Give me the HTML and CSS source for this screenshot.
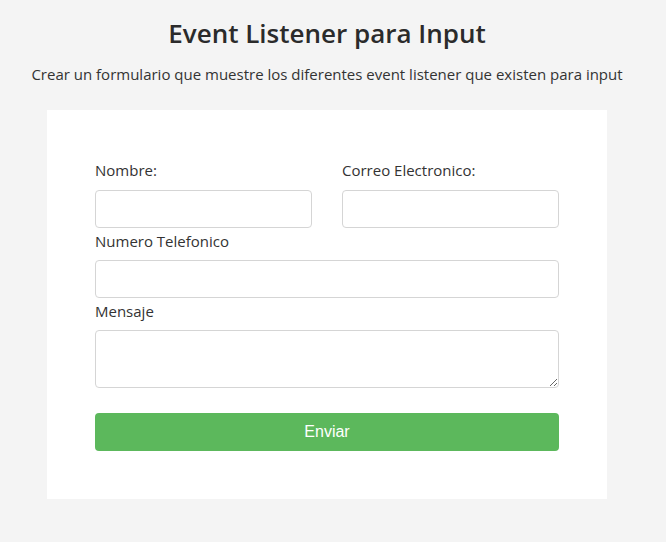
FILE: index.html
```html
<!DOCTYPE html>
<html lang="es">
<head>
<meta charset="utf-8">
<title>Event Listener para Input</title>
<link rel="stylesheet" href="styles.css">
</head>
<body>
<div class="page">
  <header class="header">
    <h1 class="title">Event Listener para Input</h1>
    <p class="subtitle">Crear un formulario que muestre los diferentes event listener que existen para input</p>
  </header>
  <main class="card">
    <form class="form">
      <div class="row">
        <div class="field">
          <label class="label" for="nombre">Nombre:</label>
          <input class="input" id="nombre" type="text">
        </div>
        <div class="field">
          <label class="label" for="correo">Correo Electronico:</label>
          <input class="input" id="correo" type="email">
        </div>
      </div>
      <div class="field">
        <label class="label" for="tel">Numero Telefonico</label>
        <input class="input" id="tel" type="tel">
      </div>
      <div class="field">
        <label class="label" for="msg">Mensaje</label>
        <textarea class="input textarea" id="msg"></textarea>
      </div>
      <button class="button" type="button">Enviar</button>
    </form>
  </main>
</div>
</body>
</html>
```
FILE: styles.css
```css
* { box-sizing: border-box; }
html, body { margin: 0; padding: 0; }
body {
  background: #f4f4f4;
  font-family: "Open Sans", "Noto Sans", sans-serif;
  color: #333;
  font-size: 15px;
}
.page {
  width: 654px;
}
.header {
  text-align: center;
  padding-top: 14px;
}
.title {
  margin: 0;
  font-size: 26px;
  font-weight: 600;
  line-height: 38px;
  color: #2b2b2b;
}
.subtitle {
  margin: 12px 0 0;
  font-size: 15px;
  line-height: 20px;
}
.card {
  width: 560px;
  margin: 26px auto 0;
  background: #fff;
  padding: 48px;
}
.form {
  display: flex;
  flex-direction: column;
}
.row {
  display: flex;
  gap: 30px;
}
.row .field { flex: 1 1 0; min-width: 0; }
.field {
  display: flex;
  flex-direction: column;
}
.label {
  line-height: 24px;
  margin-bottom: 7px;
}
.row .label { margin-bottom: 8px; }
.input {
  width: 100%;
  height: 38px;
  border: 1px solid #d5d5d5;
  border-radius: 4px;
  background: #fff;
  padding: 6px 10px;
  font: inherit;
  margin-bottom: 1px;
}
.textarea {
  height: 58px;
  resize: vertical;
}
.button {
  margin-top: 24px;
  height: 38px;
  border: none;
  border-radius: 4px;
  background: #5cb85c;
  color: #fff;
  font-family: "Liberation Sans", Arial, sans-serif;
  font-size: 16px;
}
```
